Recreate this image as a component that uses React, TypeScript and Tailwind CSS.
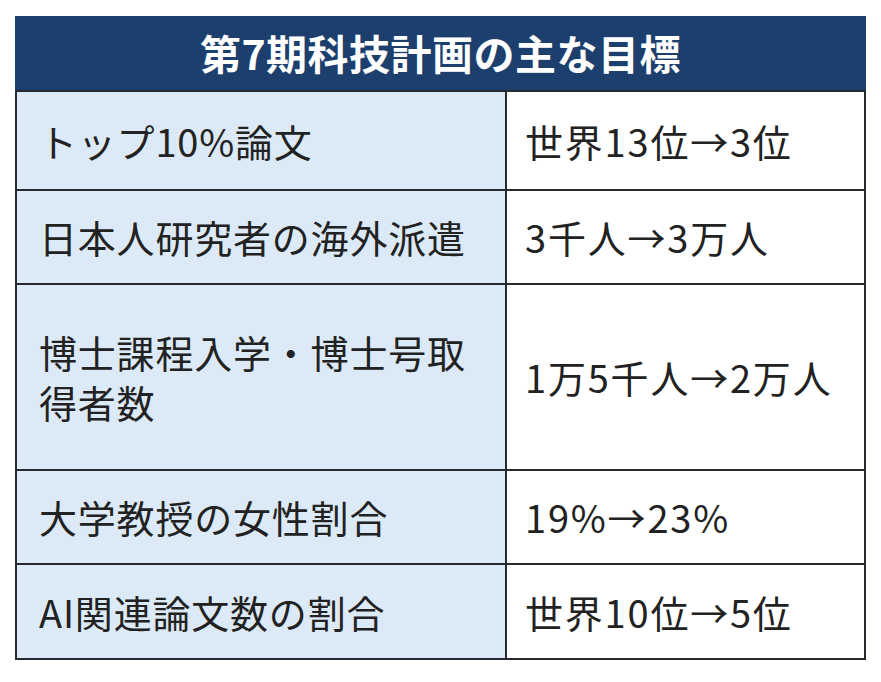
import React from "react";

const rows: { left: React.ReactNode; right: string; h: string }[] = [
  { left: "トップ10%論文", right: "世界13位→3位", h: "h-[97px]" },
  { left: "日本人研究者の海外派遣", right: "3千人→3万人", h: "h-[94px]" },
  {
    left: (
      <>
        博士課程入学・博士号取
        <br />
        得者数
      </>
    ),
    right: "1万5千人→2万人",
    h: "h-[186px]",
  },
  { left: "大学教授の女性割合", right: "19%→23%", h: "h-[94px]" },
  { left: "AI関連論文数の割合", right: "世界10位→5位", h: "h-[95px]" },
];

export default function App() {
  return (
    <div
      className="w-[881px] h-[682px] bg-white pt-[16px] pl-[15px]"
      style={{ fontFamily: '"Noto Sans CJK JP", "Noto Sans", sans-serif' }}
    >
      <div className="w-[851px] border-2 border-t-0 border-[#262a30]">
        <div className="h-[76px] bg-[#1c3f6e] flex items-center justify-center border-b-2 border-[#262a30] -mx-[2px]">
          <span className="text-white font-bold text-[41px] leading-none tracking-[0.5px] -mt-[2px]">
            第7期科技計画の主な目標
          </span>
        </div>
        {rows.map((r, i) => (
          <div
            key={i}
            className={`grid grid-cols-[490px_1fr] ${r.h} ${i > 0 ? "border-t-2 border-[#262a30]" : ""}`}
          >
            <div className="bg-[#dce9f6] border-r-2 border-[#262a30] flex items-center pl-[22px] text-[#222222] text-[38px] leading-[50px] tracking-[0.8px]">
              <div>{r.left}</div>
            </div>
            <div className="bg-white flex items-center pl-[18px] text-[#222222] text-[38px] leading-[50px] tracking-[1.8px]">
              {r.right}
            </div>
          </div>
        ))}
      </div>
    </div>
  );
}
